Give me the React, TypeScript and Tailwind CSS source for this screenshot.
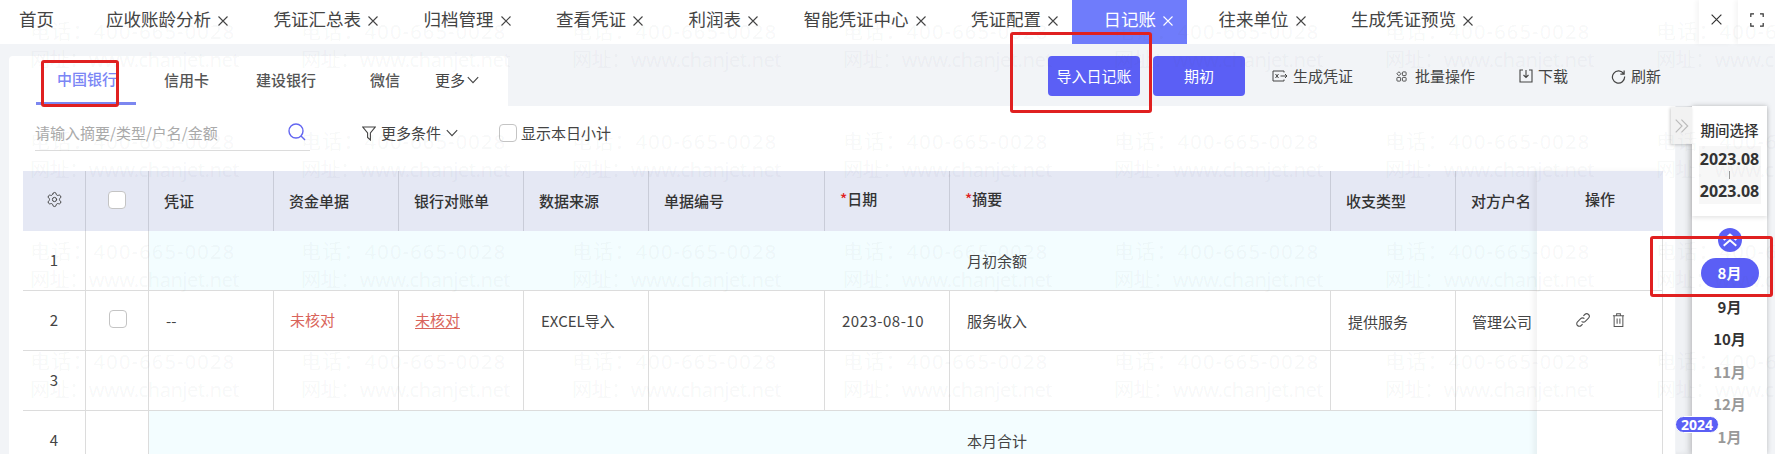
import React from "react";
import { Settings } from "lucide-react";

const CJK = "font-['Noto_Sans_CJK_SC','Noto_Sans',sans-serif]";

const tabs: { t: string; close?: boolean; active?: boolean }[] = [
  { t: "首页" },
  { t: "应收账龄分析", close: true },
  { t: "凭证汇总表", close: true },
  { t: "归档管理", close: true },
  { t: "查看凭证", close: true },
  { t: "利润表", close: true },
  { t: "智能凭证中心", close: true },
  { t: "凭证配置", close: true },
  { t: "日记账", close: true, active: true },
  { t: "往来单位", close: true },
  { t: "生成凭证预览", close: true },
];

function X({ className = "" }: { className?: string }) {
  return (
    <svg viewBox="0 0 12 12" className={className} fill="none" stroke="currentColor" strokeWidth="1.1">
      <path d="M1.5 1.5l9 9M10.5 1.5l-9 9" />
    </svg>
  );
}

function Chevron({ className = "" }: { className?: string }) {
  return (
    <svg viewBox="0 0 12 8" className={className} fill="none" stroke="currentColor" strokeWidth="1.1">
      <path d="M.8 1.2L6 6.6l5.2-5.4" />
    </svg>
  );
}

function Box({ className = "" }: { className?: string }) {
  return <div className={`rounded-[4px] border border-[#c4c4c4] bg-white ${className}`} />;
}

const widths = [63, 63, 125, 125, 125, 125, 176, 125, 381, 125, 81];
const gridCols = "grid-cols-[63px_63px_125px_125px_125px_125px_176px_125px_381px_125px_81px]";

const heads = ["", "", "凭证", "资金单据", "银行对账单", "数据来源", "单据编号", "*日期", "*摘要", "收支类型", "对方户名"];

function Head() {
  return (
    <div className={`grid ${gridCols} h-[60px] bg-[#e5e8f4]`}>
      {heads.map((h, i) => (
        <div
          key={i}
          className={`flex items-center border-r border-[#c9ccd8] text-[15px] font-medium text-[#333] whitespace-nowrap overflow-hidden ${
            i === 0 || i === 1 ? "justify-center pb-[3px]" : "pl-[15px]"
          } ${i === 7 || i === 8 ? "pb-[4px]" : ""} ${i === 10 ? "border-r-0" : ""}`}
        >
          {i === 0 && <Settings className="h-[17px] w-[17px] text-[#444]" strokeWidth={1.4} />}
          {i === 1 && <Box className="h-[18px] w-[18px]" />}
          {h.startsWith("*") ? (
            <>
              <span className="text-[#e02020]">*</span>
              {h.slice(1)}
            </>
          ) : (
            h
          )}
        </div>
      ))}
    </div>
  );
}

function SummaryRow({ n, label }: { n: number; label: string }) {
  return (
    <div className={`grid ${gridCols} h-[60px] border-b border-[#dcdcdc] bg-[#f3fdff]`}>
      <div className="flex items-center justify-center border-x border-[#dcdcdc] bg-white pb-[1px] text-[15px] text-[#444] -ml-px">{n}</div>
      <div className="border-r border-[#dcdcdc] bg-white" />
      <div className="col-span-6" />
      <div className="flex items-center pl-[17px] pt-[2px] text-[15px] text-[#444]">{label}</div>
    </div>
  );
}

function Cell({ children, className = "" }: { children?: React.ReactNode; className?: string }) {
  return <div className={`flex items-center overflow-hidden whitespace-nowrap border-r border-[#dcdcdc] text-[15px] text-[#444] ${className}`}>{children}</div>;
}

function DataRow() {
  return (
    <div className={`grid ${gridCols} h-[60px] border-b border-[#dcdcdc] bg-white`}>
      <Cell className="justify-center border-l -ml-px">2</Cell>
      <Cell className="justify-center pl-[1px] pb-[4px]">
        <Box className="h-[18px] w-[18px]" />
      </Cell>
      <Cell className="pl-[17px] pt-[2px]">--</Cell>
      <Cell className="pl-[16px] text-[#d9645a]">未核对</Cell>
      <Cell className="pl-[16px] text-[#d9645a]">
        <span className="underline underline-offset-2">未核对</span>
      </Cell>
      <Cell className="pl-[17px] pt-[2px]">EXCEL导入</Cell>
      <Cell />
      <Cell className="pl-[17px] pt-[2px] tracking-[0.5px]">2023-08-10</Cell>
      <Cell className="pl-[17px] pt-[2px]">服务收入</Cell>
      <Cell className="pl-[17px] pt-[4px]">提供服务</Cell>
      <Cell className="border-r-0 pl-[16px] pt-[4px]">管理公司</Cell>
    </div>
  );
}

function EmptyRow() {
  return (
    <div className={`grid ${gridCols} h-[60px] border-b border-[#dcdcdc] bg-white`}>
      <Cell className="justify-center border-l -ml-px">3</Cell>
      {widths.slice(1).map((_, i) => (
        <Cell key={i} className={i === 9 ? "border-r-0" : ""} />
      ))}
    </div>
  );
}

function Action({ icon, label }: { icon: React.ReactNode; label: string }) {
  return (
    <div className="flex items-center gap-[5px] text-[15px] text-[#444] whitespace-nowrap">
      {icon}
      <span>{label}</span>
    </div>
  );
}

export default function App() {
  return (
    <div className={`relative h-[454px] w-[1775px] overflow-hidden bg-[#f2f4f7] ${CJK}`}>
      {/* Top tabs */}
      <div className="relative flex h-[44px] items-stretch bg-white pl-[19px] text-[#444]">
        {tabs.map((tab, i) => (
          <div
            key={tab.t}
            className={`flex items-center pb-[5px] text-[17.5px] whitespace-nowrap ${i === 0 ? "mr-[52px]" : "mr-[44.5px]"} ${
              tab.active ? "-ml-[32px] !mr-[31.5px] bg-[#6f7cfb] pl-[32px] pr-[13px] text-white" : ""
            }`}
          >
            <span>{tab.t}</span>
            {tab.close && <X className="ml-[6px] mt-[2px] h-[12px] w-[12px]" />}
          </div>
        ))}
        <div className="absolute right-0 top-0 flex h-[44px]">
          <div className="flex w-[34px] items-center justify-center bg-white pb-[5px] text-[#333] shadow-[-3px_0_4px_rgba(0,0,0,0.04)]">
            <X className="h-[13px] w-[13px]" />
          </div>
          <div className="ml-[5px] flex w-[37px] items-center justify-center bg-white pb-[5px] text-[#333] shadow-[-3px_0_4px_rgba(0,0,0,0.04)]">
            <svg viewBox="0 0 14 14" className="h-[14px] w-[14px]" fill="none" stroke="currentColor" strokeWidth="1.2">
              <path d="M.8 4V.8H4M10 .8h3.2V4M13.2 10v3.2H10M4 13.2H.8V10" />
            </svg>
          </div>
        </div>
      </div>

      {/* Toolbar row */}
      <div className="flex h-[62px] pl-[9px] pt-[12px]">
        <div className="flex h-[50px] w-[499px] rounded-t-[4px] bg-white text-[15px] text-[#555]">
          <div className="ml-[27px] flex h-[49px] w-[100px] items-center justify-center border-b-[3px] border-[#7c87f0] pl-[2px] font-medium text-[#7b86f5]">
            中国银行
          </div>
          <div className="ml-[28px] flex items-center pb-[2px] font-medium">信用卡</div>
          <div className="ml-[47px] flex items-center pb-[2px] font-medium">建设银行</div>
          <div className="ml-[54px] flex items-center pb-[2px] font-medium">微信</div>
          <div className="ml-[35px] flex items-center gap-[2px] pb-[2px] text-[#444]">
            更多
            <Chevron className="h-[8px] w-[12px]" />
          </div>
        </div>
        <div className="ml-[540px] flex gap-[13px] pt-0 text-[15px] text-white">
          <div className="flex h-[40px] w-[92px] items-center justify-center rounded-[4px] bg-[#5b5ff5]">导入日记账</div>
          <div className="flex h-[40px] w-[92px] items-center justify-center rounded-[4px] bg-[#5b5ff5]">期初</div>
        </div>
        <div className="ml-[27px] flex h-[40px] items-center">
          <Action
            label="生成凭证"
            icon={
              <svg viewBox="0 0 16 12" className="h-[12px] w-[16px] text-[#444]" fill="none" stroke="currentColor" strokeWidth="1">
                <path d="M12 2.5V1H1v10h11V9.5M3.5 4l3 4M6.5 4l-3 4M8.5 6H15M13 4l2 2-2 2" />
              </svg>
            }
          />
          <div className="ml-[43px]">
            <Action
              label="批量操作"
              icon={
                <svg viewBox="0 0 12 12" className="mr-[3px] h-[11px] w-[11px] text-[#444]" fill="none" stroke="currentColor" strokeWidth="1">
                  <path d="M3.2.8L5.4 3 3.2 5.2 1 3z" />
                  <rect x="7" y="1" width="4" height="4" rx=".8" />
                  <rect x="1" y="7" width="4" height="4" rx=".8" />
                  <rect x="7" y="7" width="4" height="4" rx=".8" />
                </svg>
              }
            />
          </div>
          <div className="ml-[44px]">
            <Action
              label="下载"
              icon={
                <svg viewBox="0 0 14 14" className="h-[14px] w-[14px] text-[#444]" fill="none" stroke="currentColor" strokeWidth="1.1">
                  <path d="M4 1H1v12h12V1h-3M7 1v7M4.5 6L7 8.5 9.5 6" />
                </svg>
              }
            />
          </div>
          <div className="ml-[43px]">
            <Action
              label="刷新"
              icon={
                <svg viewBox="0 0 16 16" className="h-[15px] w-[15px] text-[#444]" fill="none" stroke="currentColor" strokeWidth="1.3">
                  <path d="M13.6 5.2A6.5 6.5 0 1 0 14.5 8M14 1.5v4h-4" />
                </svg>
              }
            />
          </div>
        </div>
      </div>

      {/* Main card */}
      <div className="flex h-[348px] pl-[9px]">
        <div className="w-[1666px] shrink-0 bg-white">
          <div className="flex h-[65px] pl-[26px] pt-[17px]">
            <div className="relative h-[28px] w-[275px] border-b border-[#dcdcdc] text-[15px] leading-[20px] text-[#aaa]">
              请输入摘要/类型/户名/金额
              <svg viewBox="0 0 18 18" className="absolute left-[253px] top-0 h-[18px] w-[18px] text-[#6366f1]" fill="none" stroke="currentColor" strokeWidth="1.4">
                <circle cx="8" cy="8" r="7" />
                <path d="M13 13l4 4" />
              </svg>
            </div>
            <div className="ml-[52px] flex h-[20px] items-center text-[15px] text-[#444]">
              <svg viewBox="0 0 14 15" className="h-[15px] w-[14px]" fill="none" stroke="currentColor" strokeWidth="1.1">
                <path d="M.8 1h12.4L8.4 7v7L5.6 11.5V7z" />
              </svg>
              <span className="ml-[5px]">更多条件</span>
              <Chevron className="ml-[5px] h-[8px] w-[12px]" />
            </div>
            <div className="ml-[41px] flex h-[20px] items-center text-[15px] text-[#444]">
              <Box className="h-[18px] w-[18px]" />
              <span className="ml-[4px]">显示本日小计</span>
            </div>
          </div>

          <div className="ml-[14px] flex">
            <div className="w-[1514px] shrink-0 overflow-hidden">
              <div className="w-[1514px]">
                <Head />
                <SummaryRow n={1} label="月初余额" />
                <DataRow />
                <EmptyRow />
                <SummaryRow n={4} label="本月合计" />
              </div>
            </div>
            <div className="relative z-10 w-[126px] shrink-0 bg-white shadow-[-4px_0_5px_rgba(0,0,0,0.05)]">
              <div className="flex h-[60px] items-center justify-center bg-[#e5e8f4] pb-[4px] text-[15px] font-medium text-[#333]">操作</div>
              <div className="h-[60px] border-b border-r border-[#dcdcdc]" />
              <div className="flex h-[60px] items-start gap-[21px] border-b border-r border-[#dcdcdc] pl-[38px] pt-[21px] text-[#555]">
                <svg viewBox="0 0 16 16" className="h-[16px] w-[16px]" fill="none" stroke="currentColor" strokeWidth="1.1">
                  <path d="M6.6 9.4a2.6 2.6 0 0 0 3.7 0l3.2-3.2a2.6 2.6 0 0 0-3.7-3.7L8.4 3.9M9.4 6.6a2.6 2.6 0 0 0-3.7 0L2.5 9.8a2.6 2.6 0 0 0 3.7 3.7l1.4-1.4" />
                </svg>
                <svg viewBox="0 0 14 16" className="h-[16px] w-[13px]" fill="none" stroke="currentColor" strokeWidth="1.1">
                  <path d="M1 3.5h12M5 3.5V1.2h4v2.3M2.3 3.5V15h9.4V3.5M5.5 6.5v5.5M8.5 6.5v5.5" />
                </svg>
              </div>
              <div className="h-[60px] border-b border-r border-[#dcdcdc]" />
              <div className="h-[60px] border-r border-[#dcdcdc]" />
            </div>
          </div>
        </div>
      </div>

      {/* Period panel */}
      <div className="absolute left-[1676px] top-[106px] h-[348px] w-[16px] bg-[#f0f2f5] shadow-[inset_-5px_0_5px_rgba(0,0,0,0.07)]" />
      <div className="absolute left-[1692px] top-[106px] flex h-[348px] w-[75px] flex-col items-center bg-white font-bold shadow-[0_0_5px_rgba(0,0,0,0.22)]">
        <div className="absolute -left-[21px] top-[1px] flex h-[37px] w-[21px] items-center justify-center bg-[#f2f2f2] text-[#bbb] shadow-[-1px_1px_3px_rgba(0,0,0,0.2)]">
          <svg viewBox="0 0 14 14" className="h-[16px] w-[16px]" fill="none" stroke="currentColor" strokeWidth="1">
            <path d="M1.5 1.5L7 7l-5.5 5.5M6.5 1.5L12 7l-5.5 5.5" />
          </svg>
        </div>
        <div className="w-full shadow-[0_2px_4px_rgba(0,0,0,0.1)]">
          <div className="flex h-[40px] items-end justify-center pb-[5px] text-[14.5px] font-medium text-[#333]">期间选择</div>
          <div className="mx-auto mb-[12px] flex h-[58px] w-[62px] flex-col items-center justify-center bg-[#f7f7f7] font-['Noto_Sans',sans-serif] text-[16px] font-bold leading-[16px] text-[#333]">
            <span>2023.08</span>
            <span className="my-[4px] h-[8px] w-px bg-[#999]" />
            <span>2023.08</span>
          </div>
        </div>
        <div className="mt-[12px] flex h-[24px] w-[24px] items-center justify-center rounded-full bg-[#5b5ff5] text-white">
          <svg viewBox="0 0 14 12" className="h-[14px] w-[16px]" fill="none" stroke="currentColor" strokeWidth="1.7">
            <path d="M1.5 6L7 1.2 12.5 6M1.5 11L7 6.2l5.5 4.8" />
          </svg>
        </div>
        <div className="mt-[6px] flex h-[30px] w-[58px] items-center justify-center rounded-full bg-[#5b5ff5] text-[15px] text-white">8月</div>
        <div className="mt-[2px] flex flex-col items-center">
          {[
            ["9月", "#333"],
            ["10月", "#333"],
            ["11月", "#999"],
            ["12月", "#999"],
            ["1月", "#999"],
          ].map(([m, c]) => (
            <div key={m} className="flex h-[32.5px] shrink-0 items-center justify-center pt-[1px] text-[15px]" style={{ color: c }}>
              {m}
            </div>
          ))}
        </div>
      </div>
      <div className="absolute left-[1675px] top-[416px] flex h-[17px] w-[44px] items-center justify-center rounded-full border border-white bg-[#5b5ff5] font-['Noto_Sans',sans-serif] text-[14px] font-bold text-white">
        2024
      </div>

      {/* Watermark */}
      <div className="pointer-events-none absolute inset-0 z-20 grid auto-rows-[110px] grid-cols-[repeat(7,271px)] overflow-hidden pl-[30px] pt-[18px] font-['Noto_Sans','Noto_Sans_CJK_SC',sans-serif] text-[20px] leading-[28px] text-[rgba(60,70,90,0.05)]">
        {Array.from({ length: 28 }).map((_, i) => (
          <div key={i} className="whitespace-nowrap">
            <div className="tracking-[1.2px]">电话：400-665-0028</div>
            <div className="tracking-[-0.45px]">网址：www.chanjet.net</div>
          </div>
        ))}
      </div>

      {/* Red annotation boxes */}
      <div className="absolute left-[41px] top-[60px] z-30 h-[47px] w-[78px] rounded-[3px] border-[3px] border-[#e02020]" />
      <div className="absolute left-[1010px] top-[32px] z-30 h-[81px] w-[142px] rounded-[3px] border-[3px] border-[#e02020]" />
      <div className="absolute left-[1650px] top-[236px] z-30 h-[61px] w-[123px] rounded-[3px] border-[3px] border-[#e02020]" />
    </div>
  );
}
